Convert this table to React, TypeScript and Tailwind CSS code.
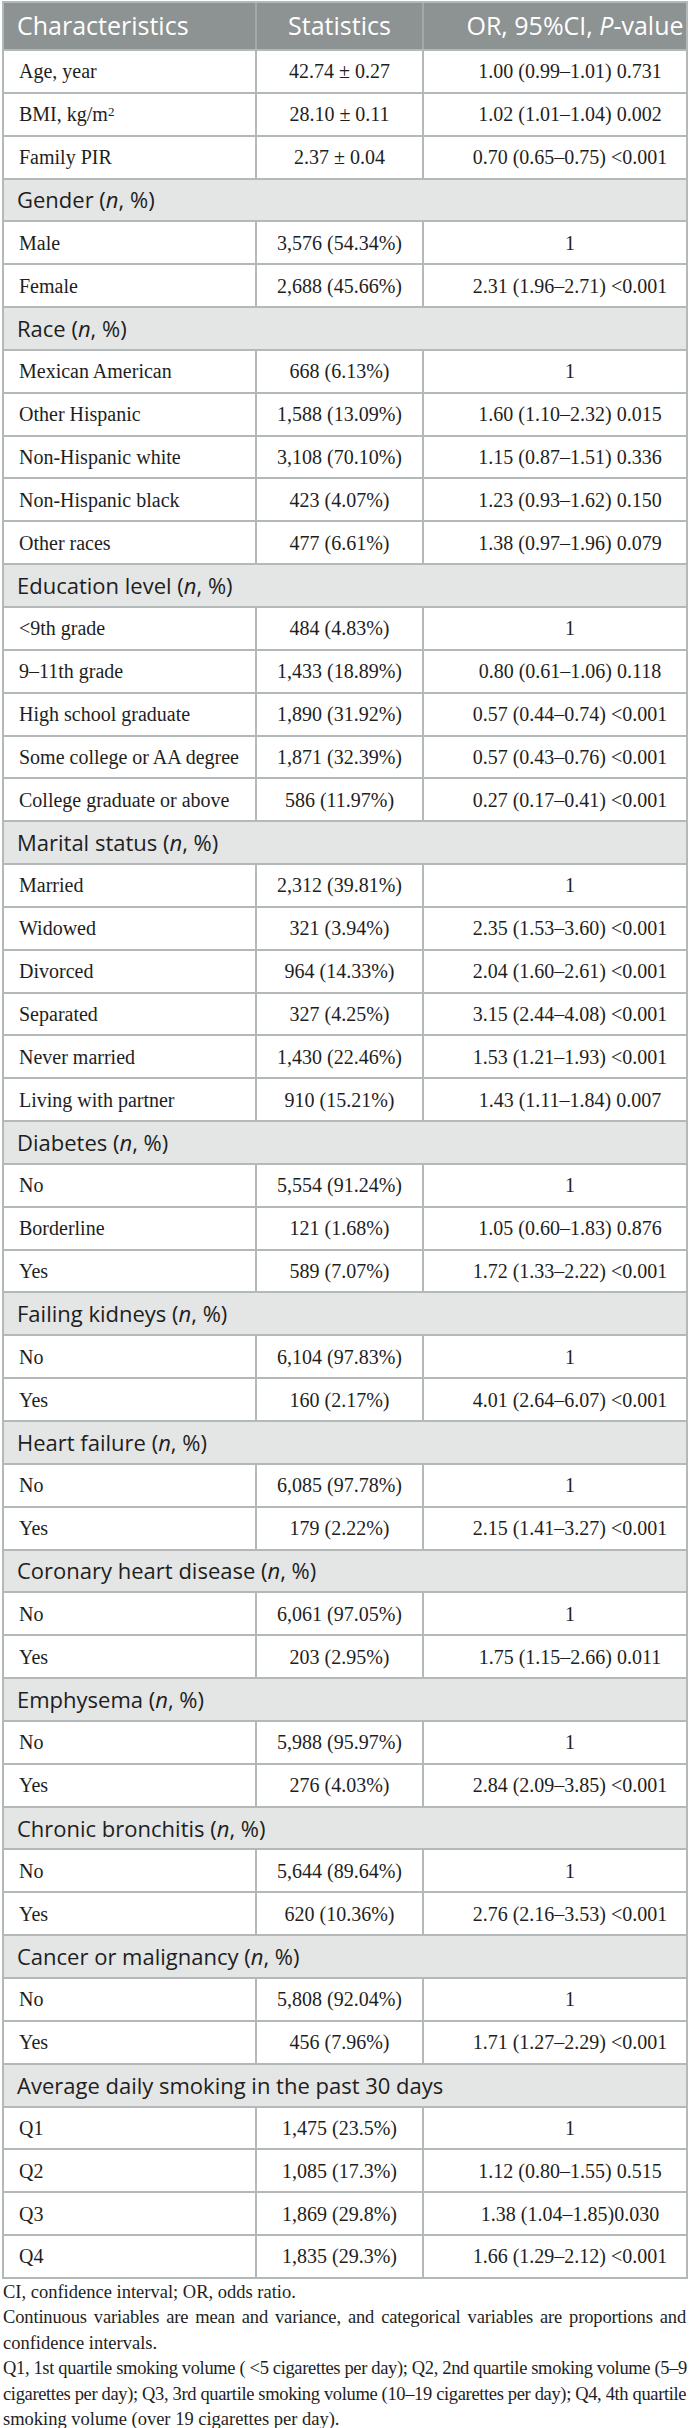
import React from "react";

type Row =
  | { kind: "section"; label: React.ReactNode }
  | { kind: "data"; label: React.ReactNode; stat: string; or: string };

const nPct = (name: string) => (
  <>
    {name} (<i>n</i>, %)
  </>
);

const rows: Row[] = [
  { kind: "data", label: "Age, year", stat: "42.74 ± 0.27", or: "1.00 (0.99–1.01) 0.731" },
  {
    kind: "data",
    label: (
      <>
        BMI, kg/m<sup className="text-[13px] relative -top-[2px]">2</sup>
      </>
    ),
    stat: "28.10 ± 0.11",
    or: "1.02 (1.01–1.04) 0.002",
  },
  { kind: "data", label: "Family PIR", stat: "2.37 ± 0.04", or: "0.70 (0.65–0.75) <0.001" },
  { kind: "section", label: nPct("Gender") },
  { kind: "data", label: "Male", stat: "3,576 (54.34%)", or: "1" },
  { kind: "data", label: "Female", stat: "2,688 (45.66%)", or: "2.31 (1.96–2.71) <0.001" },
  { kind: "section", label: nPct("Race") },
  { kind: "data", label: "Mexican American", stat: "668 (6.13%)", or: "1" },
  { kind: "data", label: "Other Hispanic", stat: "1,588 (13.09%)", or: "1.60 (1.10–2.32) 0.015" },
  { kind: "data", label: "Non-Hispanic white", stat: "3,108 (70.10%)", or: "1.15 (0.87–1.51) 0.336" },
  { kind: "data", label: "Non-Hispanic black", stat: "423 (4.07%)", or: "1.23 (0.93–1.62) 0.150" },
  { kind: "data", label: "Other races", stat: "477 (6.61%)", or: "1.38 (0.97–1.96) 0.079" },
  { kind: "section", label: nPct("Education level") },
  { kind: "data", label: "<9th grade", stat: "484 (4.83%)", or: "1" },
  { kind: "data", label: "9–11th grade", stat: "1,433 (18.89%)", or: "0.80 (0.61–1.06) 0.118" },
  { kind: "data", label: "High school graduate", stat: "1,890 (31.92%)", or: "0.57 (0.44–0.74) <0.001" },
  { kind: "data", label: "Some college or AA degree", stat: "1,871 (32.39%)", or: "0.57 (0.43–0.76) <0.001" },
  { kind: "data", label: "College graduate or above", stat: "586 (11.97%)", or: "0.27 (0.17–0.41) <0.001" },
  { kind: "section", label: nPct("Marital status") },
  { kind: "data", label: "Married", stat: "2,312 (39.81%)", or: "1" },
  { kind: "data", label: "Widowed", stat: "321 (3.94%)", or: "2.35 (1.53–3.60) <0.001" },
  { kind: "data", label: "Divorced", stat: "964 (14.33%)", or: "2.04 (1.60–2.61) <0.001" },
  { kind: "data", label: "Separated", stat: "327 (4.25%)", or: "3.15 (2.44–4.08) <0.001" },
  { kind: "data", label: "Never married", stat: "1,430 (22.46%)", or: "1.53 (1.21–1.93) <0.001" },
  { kind: "data", label: "Living with partner", stat: "910 (15.21%)", or: "1.43 (1.11–1.84) 0.007" },
  { kind: "section", label: nPct("Diabetes") },
  { kind: "data", label: "No", stat: "5,554 (91.24%)", or: "1" },
  { kind: "data", label: "Borderline", stat: "121 (1.68%)", or: "1.05 (0.60–1.83) 0.876" },
  { kind: "data", label: "Yes", stat: "589 (7.07%)", or: "1.72 (1.33–2.22) <0.001" },
  { kind: "section", label: nPct("Failing kidneys") },
  { kind: "data", label: "No", stat: "6,104 (97.83%)", or: "1" },
  { kind: "data", label: "Yes", stat: "160 (2.17%)", or: "4.01 (2.64–6.07) <0.001" },
  { kind: "section", label: nPct("Heart failure") },
  { kind: "data", label: "No", stat: "6,085 (97.78%)", or: "1" },
  { kind: "data", label: "Yes", stat: "179 (2.22%)", or: "2.15 (1.41–3.27) <0.001" },
  { kind: "section", label: nPct("Coronary heart disease") },
  { kind: "data", label: "No", stat: "6,061 (97.05%)", or: "1" },
  { kind: "data", label: "Yes", stat: "203 (2.95%)", or: "1.75 (1.15–2.66) 0.011" },
  { kind: "section", label: nPct("Emphysema") },
  { kind: "data", label: "No", stat: "5,988 (95.97%)", or: "1" },
  { kind: "data", label: "Yes", stat: "276 (4.03%)", or: "2.84 (2.09–3.85) <0.001" },
  { kind: "section", label: nPct("Chronic bronchitis") },
  { kind: "data", label: "No", stat: "5,644 (89.64%)", or: "1" },
  { kind: "data", label: "Yes", stat: "620 (10.36%)", or: "2.76 (2.16–3.53) <0.001" },
  { kind: "section", label: nPct("Cancer or malignancy") },
  { kind: "data", label: "No", stat: "5,808 (92.04%)", or: "1" },
  { kind: "data", label: "Yes", stat: "456 (7.96%)", or: "1.71 (1.27–2.29) <0.001" },
  { kind: "section", label: "Average daily smoking in the past 30 days" },
  { kind: "data", label: "Q1", stat: "1,475 (23.5%)", or: "1" },
  { kind: "data", label: "Q2", stat: "1,085 (17.3%)", or: "1.12 (0.80–1.55) 0.515" },
  { kind: "data", label: "Q3", stat: "1,869 (29.8%)", or: "1.38 (1.04–1.85)0.030" },
  { kind: "data", label: "Q4", stat: "1,835 (29.3%)", or: "1.66 (1.29–2.12) <0.001" },
];

const sans = "font-['Open_Sans','Noto_Sans',sans-serif]";
const serif = "font-['Liberation_Serif','Times_New_Roman',serif]";

export default function App() {
  return (
    <div className="w-[689px] bg-white">
      <div className="ml-[2px] mt-[1px] w-[686px] border-2 border-[#b3b8b8]">
        {/* header */}
        <div className={`flex h-[46px] bg-[#8d9292] text-white text-[25px] ${sans}`}>
          <div className="w-[251px] flex items-center pl-[13px]">Characteristics</div>
          <div className="w-[167px] flex items-center justify-center border-l-2 border-[#a3a8a8]">Statistics</div>
          <div className="flex-1 flex items-center justify-center pl-[40px] border-l-2 border-[#a3a8a8] whitespace-nowrap">
            OR, 95%CI,&nbsp;<i>P</i>-value
          </div>
        </div>
        {rows.map((r, i) =>
          r.kind === "section" ? (
            <div
              key={i}
              className={`flex items-center h-[42.85px] border-t-2 border-[#b3b8b8] bg-[#e4e5e5] pl-[13px] text-[22px] text-[#1e1e1e] ${sans}`}
            >
              {r.label}
            </div>
          ) : (
            <div
              key={i}
              className={`flex h-[42.85px] border-t-2 border-[#b3b8b8] text-[20px] text-[#1e1e1e] ${serif}`}
            >
              <div className="w-[251px] flex items-center pl-[15px]">{r.label}</div>
              <div className="w-[167px] flex items-center justify-center border-l-2 border-[#b3b8b8]">{r.stat}</div>
              <div className="flex-1 flex items-center justify-center pl-[30px] border-l-2 border-[#b3b8b8] whitespace-nowrap">
                {r.or}
              </div>
            </div>
          )
        )}
      </div>
      <div className={`px-[3px] pt-[1px] text-[18.5px] leading-[25.4px] text-[#1e1e1e] ${serif}`}>
        <div>CI, confidence interval; OR, odds ratio.</div>
        <div className="text-justify [text-align-last:justify] whitespace-nowrap tracking-[-0.15px]">
          Continuous variables are mean and variance, and categorical variables are proportions and
        </div>
        <div>confidence intervals.</div>
        <div className="text-justify [text-align-last:justify] whitespace-nowrap tracking-[-0.35px]">
          Q1, 1st quartile smoking volume ( &lt;5 cigarettes per day); Q2, 2nd quartile smoking volume (5–9
        </div>
        <div className="text-justify [text-align-last:justify] whitespace-nowrap tracking-[-0.35px]">
          cigarettes per day); Q3, 3rd quartile smoking volume (10–19 cigarettes per day); Q4, 4th quartile
        </div>
        <div>smoking volume (over 19 cigarettes per day).</div>
      </div>
    </div>
  );
}
